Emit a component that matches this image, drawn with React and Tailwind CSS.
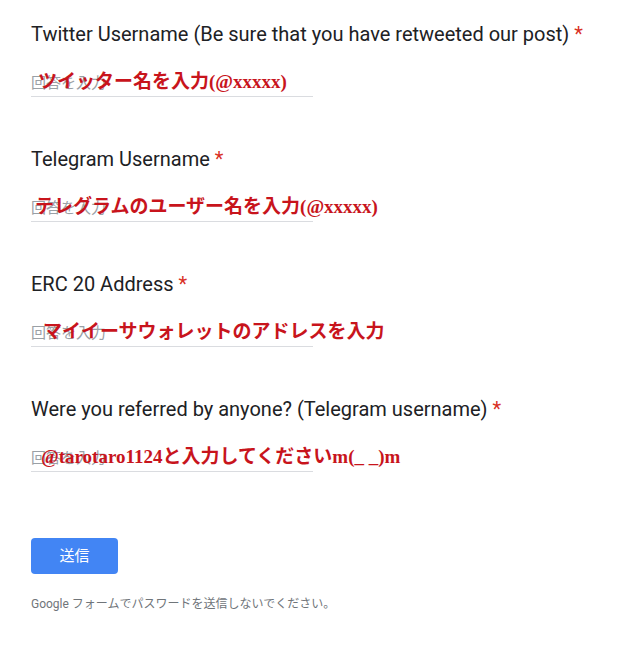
import React from 'react';

const fields = [
  {
    label: 'Twitter Username (Be sure that you have retweeted our post)',
    note: 'ツイッター名を入力(@xxxxx)',
    offset: 'left-[7px]',
  },
  {
    label: 'Telegram Username',
    note: 'テレグラムのユーザー名を入力(@xxxxx)',
    offset: 'left-[4px]',
  },
  {
    label: 'ERC 20 Address',
    note: 'マイイーサウォレットのアドレスを入力',
    offset: 'left-[12px]',
  },
  {
    label: 'Were you referred by anyone? (Telegram username)',
    note: '@tarotaro1124と入力してくださいm(_ _)m',
    offset: 'left-[10px]',
  },
];

const Field = ({ label, note, offset }) => (
  <div className="flex flex-col">
    <div className="text-[20px] leading-6 text-[#202124]">
      {label}
      <span className="ml-[5px] text-[#d93025]">*</span>
    </div>
    <div className="relative mt-[27px] w-[282px] border-b border-[#dadce0] pb-[3px] text-[15px] leading-5 text-[#9aa0a6]">
      回答を入力
      <span
        className={`absolute ${offset} top-[-3px] whitespace-nowrap text-[19px] font-bold leading-6 text-[#c8141c] [font-family:'Liberation_Serif','Noto_Sans_CJK_JP',serif]`}
      >
        {note}
      </span>
    </div>
  </div>
);

export default function App() {
  return (
    <div className="min-h-[652px] w-[635px] bg-white pl-[31px] pt-[22px] [font-family:Roboto,'Noto_Sans_CJK_JP',sans-serif]">
      <div className="flex flex-col gap-[50px]">
        {fields.map((f, i) => (
          <Field key={i} {...f} />
        ))}
      </div>

      <button className="mt-[66px] flex h-[36px] w-[87px] items-center justify-center rounded-[4px] bg-[#4285f4] text-[15px] leading-5 text-white">
        送信
      </button>

      <p className="mt-[22px] text-[12px] leading-4 text-[#70757a]">
        Google フォームでパスワードを送信しないでください。
      </p>
    </div>
  );
}
